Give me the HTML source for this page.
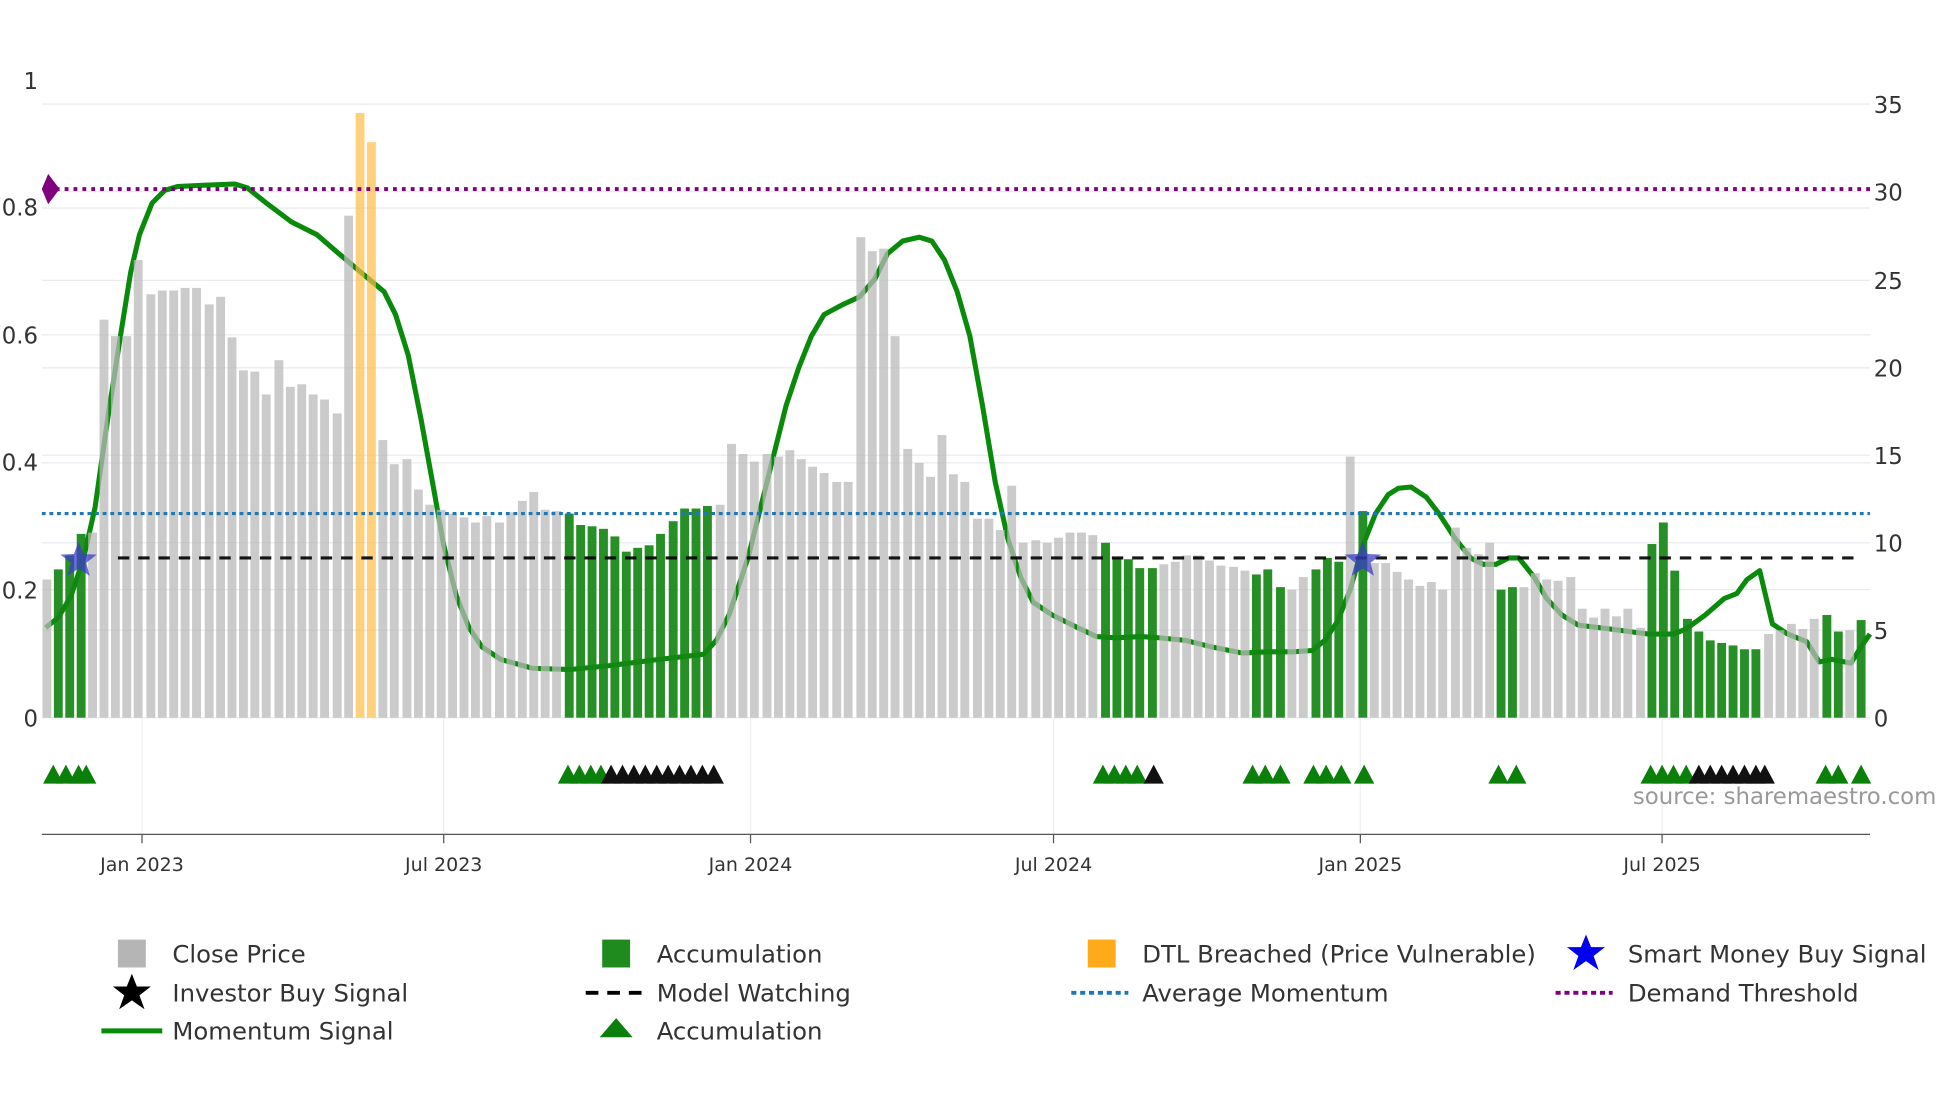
<!DOCTYPE html>
<html><head><meta charset="utf-8"><style>
html,body{margin:0;padding:0;background:#fff;}
svg{display:block;font-family:"DejaVu Sans","Liberation Sans",sans-serif;}
</style></head><body>
<svg id="c" width="1960" height="1102" viewBox="0 0 1546 869" xmlns="http://www.w3.org/2000/svg">
<g stroke="#e8ebf0" stroke-width="1">
<line x1="33" y1="82" x2="1475" y2="82"/><line x1="33" y1="151" x2="1475" y2="151"/>
<line x1="33" y1="164" x2="1475" y2="164"/><line x1="33" y1="221" x2="1475" y2="221"/>
<line x1="33" y1="264" x2="1475" y2="264"/><line x1="33" y1="290" x2="1475" y2="290"/>
<line x1="33" y1="359" x2="1475" y2="359"/><line x1="33" y1="365" x2="1475" y2="365"/>
<line x1="33" y1="428" x2="1475" y2="428"/><line x1="33" y1="465" x2="1475" y2="465"/>
<line x1="33" y1="497" x2="1475" y2="497"/><line x1="33" y1="566" x2="1475" y2="566"/>
</g>
<g stroke="#eef0f3" stroke-width="1">
<line x1="112" y1="566" x2="112" y2="658"/><line x1="350" y1="566" x2="350" y2="658"/>
<line x1="592" y1="566" x2="592" y2="658"/><line x1="831" y1="566" x2="831" y2="658"/>
<line x1="1073" y1="566" x2="1073" y2="658"/><line x1="1311" y1="566" x2="1311" y2="658"/>
</g>
<g font-size="18" fill="#333">
<text x="30" y="70" text-anchor="end">1</text>
<text x="30" y="170" text-anchor="end">0.8</text>
<text x="30" y="271" text-anchor="end">0.6</text>
<text x="30" y="371" text-anchor="end">0.4</text>
<text x="30" y="472" text-anchor="end">0.2</text>
<text x="30" y="573" text-anchor="end">0</text>
<text x="1478" y="89">35</text><text x="1478" y="158">30</text><text x="1478" y="228">25</text>
<text x="1478" y="297">20</text><text x="1478" y="366">15</text><text x="1478" y="435">10</text>
<text x="1478" y="504">5</text><text x="1478" y="573">0</text>
</g>
<path id="mom" fill="none" stroke="#0a8a0a" stroke-width="4" stroke-linejoin="round"/>
<g id="bars"></g>
<line x1="33" y1="405" x2="1475" y2="405" stroke="#1f77b4" stroke-width="2.5" stroke-dasharray="3,3"/>
<line x1="93" y1="440" x2="1462" y2="440" stroke="#000" stroke-width="2.5" stroke-dasharray="9,7" opacity="0.9"/>
<line x1="44" y1="149" x2="1475" y2="149" stroke="#800080" stroke-width="3" stroke-dasharray="3,4"/>
<polygon points="38,137 47,149 38,161 33,149" fill="#800080"/>
<g id="stars"></g>
<g id="tri"></g>
<text x="1288" y="634" font-size="18" fill="#999">source: sharemaestro.com</text>
<line x1="33" y1="658" x2="1475" y2="658" stroke="#555" stroke-width="1"/>
<g stroke="#555"><line x1="112" y1="658" x2="112" y2="665"/><line x1="350" y1="658" x2="350" y2="665"/><line x1="592" y1="658" x2="592" y2="665"/><line x1="831" y1="658" x2="831" y2="665"/><line x1="1073" y1="658" x2="1073" y2="665"/><line x1="1311" y1="658" x2="1311" y2="665"/></g>
<g font-size="15" fill="#333" text-anchor="middle">
<text x="112" y="687">Jan 2023</text><text x="350" y="687">Jul 2023</text><text x="592" y="687">Jan 2024</text>
<text x="831" y="687">Jul 2024</text><text x="1073" y="687">Jan 2025</text><text x="1311" y="687">Jul 2025</text>
</g>
<g font-size="19.2" fill="#333">
<rect x="93" y="741" width="22" height="22" fill="#b5b5b5"/><text x="136" y="759">Close Price</text>
<rect x="475" y="741" width="22" height="22" fill="#1f8b1f"/><text x="518" y="759">Accumulation</text>
<rect x="858" y="741" width="22" height="22" fill="#ffab19"/><text x="901" y="759">DTL Breached (Price Vulnerable)</text>
<polygon points="1251,737 1255,747 1266,747 1257,754 1261,765 1251,758 1241,765 1245,754 1236,747 1247,747" fill="#0000ee"/><text x="1284" y="759">Smart Money Buy Signal</text>
<polygon points="104,768 108,778 119,778 110,785 114,796 104,789 94,796 98,785 89,778 100,778" fill="#000"/><text x="136" y="790">Investor Buy Signal</text>
<line x1="462" y1="783" x2="508" y2="783" stroke="#000" stroke-width="3" stroke-dasharray="10,7"/><text x="518" y="790">Model Watching</text>
<line x1="845" y1="783" x2="890" y2="783" stroke="#1f77b4" stroke-width="3" stroke-dasharray="4,3"/><text x="901" y="790">Average Momentum</text>
<line x1="1227" y1="783" x2="1272" y2="783" stroke="#800080" stroke-width="3" stroke-dasharray="4,3"/><text x="1284" y="790">Demand Threshold</text>
<line x1="80" y1="813" x2="128" y2="813" stroke="#0a8a0a" stroke-width="4"/><text x="136" y="820">Momentum Signal</text>
<polygon points="486,803 499,818 473,818" fill="#0a800a"/><text x="518" y="820">Accumulation</text>
</g>
</svg>
<script>
var G='g',O='o',Y='y';
var data=[[37,457,Y],[46,449,G],[55,438,G],[64,421,G],[73,420,Y],[82,252,Y],[91,265,Y],[100,265,Y],[109,205,Y],[119,232,Y],[128,229,Y],[137,229,Y],[146,227,Y],[155,227,Y],[165,240,Y],[174,234,Y],[183,266,Y],[192,292,Y],[201,293,Y],[210,311,Y],[220,284,Y],[229,305,Y],[238,303,Y],[247,311,Y],[256,315,Y],[266,326,Y],[275,170,Y],[284,89,O],[293,112,O],[302,347,Y],[311,366,Y],[321,362,Y],[330,386,Y],[339,398,Y],[348,402,Y],[357,405,Y],[366,408,Y],[375,412,Y],[384,407,Y],[394,412,Y],[403,404,Y],[412,395,Y],[421,388,Y],[430,402,Y],[439,403,Y],
[449,405,G],[458,414,G],[467,415,G],[476,417,G],[485,423,G],[494,435,G],[503,432,G],[512,430,G],[521,421,G],[531,411,G],[540,401,G],[549,401,G],[558,399,G],
[568,398,Y],[577,350,Y],[586,358,Y],[595,364,Y],[605,358,Y],[614,360,Y],[623,355,Y],[632,362,Y],[641,368,Y],[650,373,Y],[660,380,Y],[669,380,Y],[679,187,Y],[688,198,Y],[697,196,Y],[706,265,Y],[716,354,Y],[725,365,Y],[734,376,Y],[743,343,Y],[752,374,Y],[761,380,Y],[771,409,Y],[780,409,Y],[789,418,Y],[798,383,Y],[807,428,Y],[817,426,Y],[826,428,Y],[835,424,Y],[844,420,Y],[853,420,Y],[862,422,Y],
[872,428,G],[881,440,G],[890,441,G],[899,448,G],[909,448,G],
[918,445,Y],[927,443,Y],[936,438,Y],[945,438,Y],[954,442,Y],[963,446,Y],[973,447,Y],[982,450,Y],
[991,453,G],[1000,449,G],[1010,463,G],[1019,465,Y],[1028,455,Y],[1038,449,G],[1047,440,G],[1056,443,G],[1065,360,Y],[1075,403,G],
[1084,444,Y],[1093,444,Y],[1102,451,Y],[1111,457,Y],[1120,462,Y],[1129,459,Y],[1138,465,Y],[1148,416,Y],[1157,432,Y],[1166,437,Y],[1175,428,Y],
[1184,465,G],[1193,463,G],[1202,463,Y],[1211,452,Y],[1220,457,Y],[1229,458,Y],[1239,455,Y],[1248,480,Y],[1257,487,Y],[1266,480,Y],[1275,486,Y],[1284,480,Y],[1294,495,Y],
[1303,429,G],[1312,412,G],[1321,450,G],[1331,488,G],[1340,498,G],[1349,505,G],[1358,507,G],[1367,509,G],[1376,512,G],[1385,512,G],
[1395,500,Y],[1404,497,Y],[1413,492,Y],[1422,496,Y],[1431,488,Y],[1441,485,G],[1450,498,G],[1459,497,Y],[1468,489,G]];
var col={g:'rgba(20,135,20,0.92)',o:'rgba(255,190,70,0.7)',y:'rgba(185,185,185,0.75)'};
var h='';data.forEach(function(d){h+='<rect x="'+(d[0]-3.5)+'" y="'+d[1]+'" width="7" height="'+(566-d[1])+'" fill="'+col[d[2]]+'"/>';});
document.getElementById('bars').innerHTML=h;
var p=[[36,495],[46,487],[56,470],[66,440],[75,400],[85,330],[95,265],[103,215],[110,185],[120,160],[130,150],[140,147],[160,146],[185,145],[195,148],[210,160],[230,175],[250,185],[265,198],[285,215],[303,230],[312,248],[322,280],[332,330],[342,385],[350,430],[360,470],[370,495],[380,510],[395,520],[420,527],[450,528],[480,525],[520,520],[555,516],[565,505],[575,485],[590,440],[605,380],[620,320],[630,290],[640,265],[650,248],[665,240],[678,234],[690,220],[700,200],[712,190],[725,187],[735,190],[745,205],[755,230],[765,265],[775,320],[785,380],[795,425],[805,455],[815,475],[830,485],[850,495],[865,502],[880,503],[900,502],[915,503],[935,505],[955,510],[980,515],[1000,514],[1020,514],[1035,513],[1045,505],[1055,490],[1065,465],[1075,430],[1085,405],[1095,390],[1103,385],[1113,384],[1125,392],[1135,405],[1148,425],[1160,440],[1170,445],[1180,445],[1190,440],[1198,440],[1210,455],[1220,472],[1232,485],[1245,493],[1270,496],[1300,500],[1320,500],[1330,496],[1345,485],[1360,472],[1370,468],[1378,457],[1388,450],[1398,492],[1410,500],[1425,506],[1435,522],[1445,520],[1460,523],[1468,510],[1475,500]];
document.getElementById('mom').setAttribute('d','M'+p.map(function(q){return q.join(',');}).join(' L'));
function star(cx,cy,r,f){var s='';for(var i=0;i<10;i++){var a=-Math.PI/2+i*Math.PI/5,rr=i%2?r*0.42:r;s+=(cx+rr*Math.cos(a)).toFixed(1)+','+(cy+rr*Math.sin(a)).toFixed(1)+' ';}return '<polygon points="'+s+'" fill="'+f+'"/>';}
document.getElementById('stars').innerHTML=star(62,442,15,'rgba(60,60,200,0.75)')+star(1075,442,15,'rgba(60,60,200,0.75)');
var tg=[42,52,62,68,448,457,466,474,870,879,888,897,988,998,1010,1036,1046,1058,1076,1182,1196,1302,1311,1320,1330,1440,1450,1468];
var tb=[482,491,500,509,518,527,536,545,554,563,910,1340,1349,1358,1367,1376,1385,1392];
var t='';tg.forEach(function(x){t+='<polygon points="'+x+',603 '+(x+8)+',618 '+(x-8)+',618" fill="#0a800a"/>';});
tb.forEach(function(x){t+='<polygon points="'+x+',603 '+(x+8)+',618 '+(x-8)+',618" fill="#111"/>';});
document.getElementById('tri').innerHTML=t;
</script>
</body></html>
